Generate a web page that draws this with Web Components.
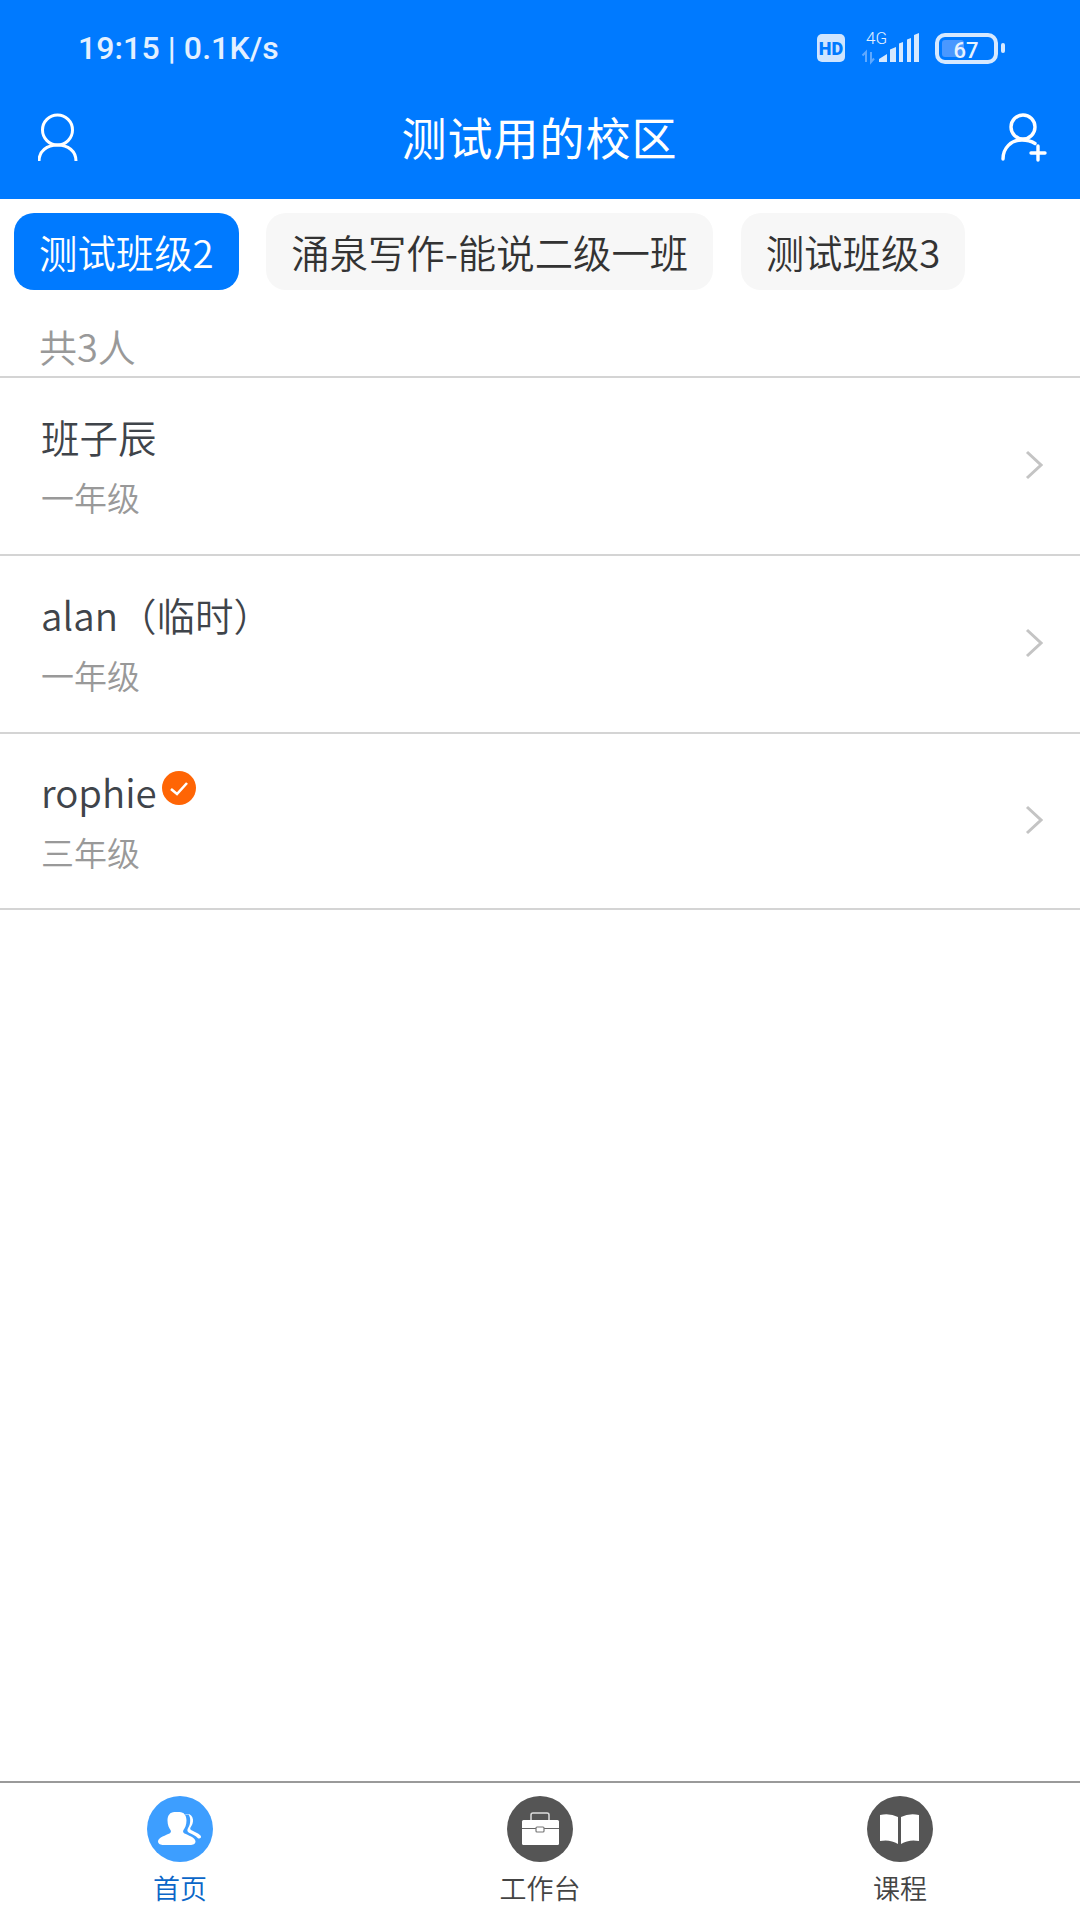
<!DOCTYPE html>
<html lang="zh-CN">
<head>
<meta charset="utf-8">
<style>
html,body{margin:0;padding:0;background:#fff}
body{font-family:"Noto Sans CJK SC","Noto Sans",sans-serif;width:1080px;height:1920px;overflow:hidden;font-weight:350}
</style>
</head>
<body>
<app-shell>
  <top-bar slot="top" title-text="测试用的校区"></top-bar>
  <class-tabs slot="top">
    <tab-pill active>测试班级2</tab-pill>
    <tab-pill>涌泉写作-能说二级一班</tab-pill>
    <tab-pill>测试班级3</tab-pill>
  </class-tabs>
  <count-line slot="top">共3人</count-line>
  <student-row slot="top" name="班子辰" grade="一年级"></student-row>
  <student-row slot="top" name="alan（临时）" grade="一年级"></student-row>
  <student-row slot="top" name="rophie" grade="三年级" verified style="height:176px"></student-row>
  <bottom-nav slot="bottom"></bottom-nav>
</app-shell>
<script>
const def=(name,html,init)=>customElements.define(name,class extends HTMLElement{
  connectedCallback(){
    if(this.shadowRoot)return;
    const r=this.attachShadow({mode:'open'});
    r.innerHTML=typeof html==='function'?html(this):html;
    if(init)init(this,r);
  }
});
def('app-shell',`<style>:host{display:flex;flex-direction:column;justify-content:space-between;height:1920px;width:1080px}
.t{display:block}</style><div class="t"><slot name="top"></slot></div><slot name="bottom"></slot>`);

def('top-bar',h=>`<style>
:host{display:block;background:#007aff;height:199px;color:#fff}
.status{height:96px;display:flex;align-items:center;justify-content:space-between;padding:3px 0 0 78px;box-sizing:border-box}
.time{font:500 32px Roboto,"Noto Sans",sans-serif;color:#e3f0ff;letter-spacing:.1px;line-height:1;margin-top:-3px}
.sys{display:block;margin-right:72px;margin-top:-3px}
.head{height:103px;display:flex;align-items:center;justify-content:space-between;padding:0 31px 21px 38px;box-sizing:border-box}
.title{font-size:45px;line-height:60px;letter-spacing:1px;margin:0;font-weight:400}
svg{display:block}
</style>
<div class="status"><span class="time">19:15 | 0.1K/s</span>
<svg class="sys" width="191" height="42" viewBox="0 -4 191 42">
  <rect x="0" y="3" width="28" height="28" rx="5" fill="#cfe5ff"/>
  <text x="14" y="23.500" text-anchor="middle" font-family="Roboto,sans-serif" font-weight="900" font-size="18" fill="#007aff">HD</text>
  <text x="49" y="12.500" font-family="Roboto,sans-serif" font-size="17" fill="#e3f0ff">4G</text>
  <path d="M49 31V21l-3.500 3.500M54 21v10l3-3.500" fill="none" stroke="#5fa9ff" stroke-width="2"/>
  <path d="M62 31v-3l8-5v8zM73 31V18.500L79 16v15zM82 31V12.500l4-1.500v20zM90 31V8.500l4-1.500v24zM97 31V4l5-2v29z" fill="#d6e9ff"/>
  <rect x="120" y="4" width="59" height="27" rx="8" fill="none" stroke="#d6e9ff" stroke-width="4"/>
  <rect x="125" y="9" width="22" height="17" rx="3" fill="#4a98ff"/>
  <text x="149" y="26.500" text-anchor="middle" font-family="Roboto,sans-serif" font-weight="500" font-size="22" fill="#e8f3ff">67</text>
  <rect x="184" y="12" width="4" height="10" rx="2" fill="#d6e9ff"/>
</svg></div>
<div class="head">
<svg width="40" height="50" viewBox="0 0 40 50" fill="none" stroke="#fff" stroke-width="3"><circle cx="19.500" cy="18" r="15"/><path d="M1 49C1 39 9 33 19.500 33S38 39 38 49"/></svg>
<h1 class="title">${h.getAttribute('title-text')}</h1>
<svg width="48" height="50" viewBox="0 0 48 50" fill="none" stroke="#fff" stroke-width="3.400" stroke-linecap="round"><circle cx="22" cy="15" r="12"/><path d="M2 47C2 36 10 28 21 28c5 0 9 1 13 3.500"/><path d="M30 41H44M37 34V48"/></svg>
</div>`);

def('class-tabs',`<style>:host{display:flex;gap:27.500px;padding:14px 0 0 14px;height:77px}</style><slot></slot>`);
def('tab-pill',h=>`<style>
:host{display:flex;align-items:center;padding:0 25px;border-radius:20px;background:#f7f7f7;color:#333;font-size:38.400px;line-height:75px;height:77px;white-space:nowrap}
:host([active]){background:#007aff;color:#fff}
</style><slot></slot>`);
def('count-line',`<style>:host{display:block;height:88px;padding:32px 0 0 39px;box-sizing:border-box;font-size:38px;line-height:48px;color:#999;border-bottom:2px solid #d4d4d4}</style><slot></slot>`);
def('student-row',h=>`<style>
:host{display:flex;align-items:center;justify-content:space-between;height:178px;box-sizing:border-box;border-bottom:2px solid #d4d4d4;padding:0 37px 0 41px}
.name{font-size:38.500px;line-height:56px;color:#3f444a;display:flex;align-items:flex-start}
.sub{font-size:33px;line-height:48px;color:#999;margin-top:9px}
.txt{margin-top:-3px}
.b{margin:8px 0 0 5px;display:block}
svg{display:block}
</style><div class="txt"><div class="name"><span>${h.getAttribute('name')}</span>${h.hasAttribute('verified')?`<svg class="b" width="34" height="34" viewBox="0 0 34 34"><circle cx="17" cy="17" r="17" fill="#ff6505"/><path d="M9 18l6 5 10-11" fill="none" stroke="#fff" stroke-width="2.600"/></svg>`:''}</div><div class="sub">${h.getAttribute('grade')}</div></div>
<svg style="margin-top:-2px" width="18" height="30" viewBox="0 0 18 30" fill="none" stroke="#c4c4c4" stroke-width="3"><path d="M2 2L16 15L2 28"/></svg>`);

const nav=(bg,svg,label,color)=>`<div class="i"><svg width="66" height="66" viewBox="0 0 66 66"><circle cx="33" cy="33" r="33" fill="${bg}"/>${svg}</svg><span style="color:${color}">${label}</span></div>`;
def('bottom-nav',`<style>
:host{display:grid;grid-template-columns:repeat(3,360px);height:139px;border-top:2px solid #9a9a9a;box-sizing:border-box;background:#fff}
.i{display:flex;flex-direction:column;align-items:center;padding-top:13px}
svg{display:block}
span{font-size:27px;line-height:36px;margin-top:8px}
</style>`+
nav('#3d9eff',`<path d="M27.500 16c-4.500 0-7 3.500-7 8.500 0 4.500 1.500 7.500 3 9.500.8 1.200.5 2.500-1 3.500-3 1.500-11.500 4-11.500 8 0 2.500 3 3.500 5.500 3.500H43c3 0 5.500-1 5.500-3.500 0-4-8-6.500-11-8-1.500-1-1.800-2.300-1-3.500 1.500-2 3-5 3-9.500 0-5-2.500-8.500-7-8.500z" fill="#fff"/><path d="M37.500 18.500c4.500-1.500 8 .5 8.500 5 .3 3-1 6-2.500 8-.6 1-.3 2 1 2.800 2.500 1.300 9 4 9.500 6.200.3 1.500-1.500 2.500-3 1.700-2.500-2.500-5-3.500-9-5.500-2-1-2-3-.8-5 1.500-2.500 2-4.500 2-7.500 0-2.200-.5-4-1.700-5.700z" fill="#fff"/>`,'首页','#0a66c8')+
nav('#555',`<rect x="15" y="24" width="37" height="25" rx="1.500" fill="#fff"/><path d="M24 24v-5q0-2 2-2h14q2 0 2 2v5" fill="none" stroke="#ddd" stroke-width="1.500"/><path d="M15 32.500H29M37 32.500H52" stroke="#666" stroke-width="1.200"/><rect x="29" y="31" width="8" height="5" rx="1" fill="#fff" stroke="#777" stroke-width="1.200"/>`,'工作台','#444')+
nav('#555',`<path d="M13 19q10-2 18 2v27q-8-5-18-3zM34 21q8-4 18-2v26q-10-2-18 3z" fill="#fff"/>`,'课程','#444'));
</script>
</body>
</html>
